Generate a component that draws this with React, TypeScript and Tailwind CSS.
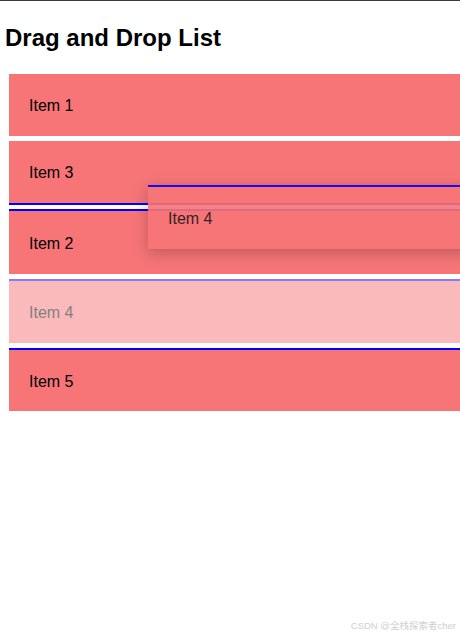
const items = [
  { id: 1, label: "Item 1", cls: "mt-0 h-[62px]" },
  { id: 3, label: "Item 3", cls: "mt-[5px] h-[64px] border-b-2 border-[#0000ff]" },
  { id: 2, label: "Item 2", cls: "mt-[4px] h-[65px] border-t-2 border-[#0000ff]" },
  { id: 4, label: "Item 4", cls: "mt-[5px] h-[64px] border-t-2 border-[#0000ff] opacity-50" },
  { id: 5, label: "Item 5", cls: "mt-[5px] h-[63px] border-t-2 border-[#0000ff]" },
];

const App = () => {
  return (
    <div
      className="relative w-[460px] h-[637px] overflow-hidden bg-white border-t border-[#3a3a3a]"
      style={{ fontFamily: '"Liberation Sans", Arial, sans-serif' }}
    >
      <h1 className="mt-[23px] ml-[5px] text-[24px] leading-[28px] font-bold text-black">
        Drag and Drop List
      </h1>

      {/* sortable list */}
      <div className="mt-[22px] ml-[9px] w-[500px] flex flex-col">
        {items.map((item) => (
          <div
            key={item.id}
            className={`flex items-center pl-5 pt-[2px] bg-[#f77577] text-[16px] text-black ${item.cls}`}
          >
            {item.label}
          </div>
        ))}
      </div>

      {/* drag overlay */}
      <div className="absolute left-[148px] top-[184px] w-[340px] h-[64px] flex items-center pl-5 pt-[2px] bg-[#f77577] border-t-2 border-[#0000ff] opacity-90 shadow-[0_4px_14px_rgba(0,0,0,0.25)] text-[16px] text-[#1a1a1a]">
        Item 4
      </div>

      <div
        className="absolute right-[4px] bottom-[4px] text-[9.5px] text-[#cfcfcf]"
        style={{ fontFamily: '"Liberation Sans", "Noto Sans CJK SC", sans-serif' }}
      >
        CSDN @全栈探索者cher
      </div>
    </div>
  );
};

export default App;
